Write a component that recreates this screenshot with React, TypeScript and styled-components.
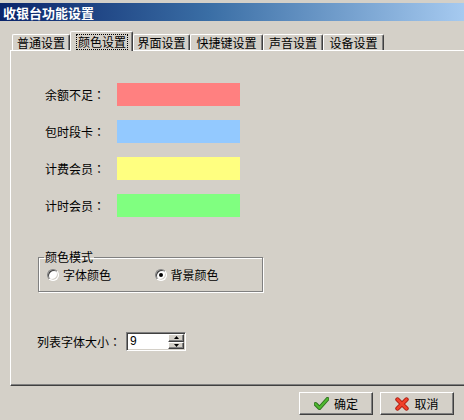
import { Fragment } from 'react';
import styled, { createGlobalStyle } from 'styled-components';

const GlobalStyle = createGlobalStyle`
  body {
    margin: 0;
    font-family: "Noto Sans CJK SC", "Liberation Sans", sans-serif;
    font-size: 12px;
    color: #000;
  }
`;

const Window = styled.div`
  width: 464px;
  height: 420px;
  box-sizing: border-box;
  padding-top: 3px;
  background: #d4d0c8;
  overflow: hidden;
  display: flex;
  flex-direction: column;
`;

const TitleBar = styled.div`
  height: 18px;
  flex: none;
  display: flex;
  align-items: center;
  padding-left: 3px;
  background: linear-gradient(to right, #0a246a, #3a6ea5 45%, #a6caf0);
  color: #fff;
  font-size: 13px;
  font-weight: bold;
  line-height: 1;
`;

const TabStrip = styled.div`
  flex: none;
  height: 19px;
  margin-top: 10px;
  padding-left: 12px;
  display: flex;
  align-items: flex-end;
`;

const Tab = styled.div<{ $active?: boolean; $width: number }>`
  position: relative;
  z-index: ${(p) => (p.$active ? 1 : 0)};
  box-sizing: border-box;
  width: ${(p) => p.$width}px;
  height: ${(p) => (p.$active ? 20 : 16)}px;
  margin-bottom: ${(p) => (p.$active ? -1 : 0)}px;
  padding-left: ${(p) => (p.$active ? 1 : 0)}px;
  background: #d4d0c8;
  border-top: 1px solid #fff;
  border-left: 1px solid #fff;
  border-right: 1px solid #404040;
  border-radius: 2px 2px 0 0;
  box-shadow: inset -1px 0 #808080;
  display: flex;
  align-items: center;
  justify-content: center;
  line-height: 14px;
`;

const FocusText = styled.span<{ $focus?: boolean }>`
  padding: 0 1px;
  border: 1px dotted ${(p) => (p.$focus ? '#000' : 'transparent')};
`;

const Panel = styled.div`
  flex: none;
  box-sizing: border-box;
  width: 480px;
  height: 336px;
  margin-left: 10px;
  padding: 32px 0 0 27px;
  border-top: 1px solid #fff;
  border-left: 1px solid #fff;
  border-bottom: 1px solid #404040;
  box-shadow: inset 0 -1px #808080;
  display: flex;
  flex-direction: column;
  align-items: flex-start;
`;

const ColorList = styled.div`
  margin-left: 7px;
  display: grid;
  grid-template-columns: 72px 123px;
  grid-auto-rows: 23px;
  row-gap: 14px;
  align-items: center;
`;

// traditional-chinese font centres the full-width colon, as in the reference
const Colon = styled.span`
  font-family: "Noto Sans CJK TC", sans-serif;
`;

const Swatch = styled.div<{ $color: string }>`
  height: 23px;
  background: ${(p) => p.$color};
`;

const GroupBox = styled.fieldset`
  box-sizing: border-box;
  width: 225px;
  margin: 33px 0 0;
  padding: 4px 0 9px 5px;
  border: 1px solid #808080;
  box-shadow: 1px 1px 0 #fff, inset 1px 1px 0 #fff;
  min-width: 0;
`;

const Legend = styled.legend`
  padding: 0 1px;
  line-height: 14px;
`;

const RadioRow = styled.div`
  display: flex;
  margin-left: 3px;
`;

const RadioOption = styled.label`
  width: 108px;
  display: flex;
  align-items: center;
  gap: 4px;
  line-height: 14px;
`;

const RadioCircle = styled.span<{ $checked?: boolean }>`
  box-sizing: border-box;
  width: 12px;
  height: 12px;
  border-radius: 50%;
  border: 1px solid;
  border-color: #808080 #fff #fff #808080;
  box-shadow: inset 1px 1px 0 #404040, inset -1px -1px 0 #d4d0c8;
  background: #fff;
  display: flex;
  align-items: center;
  justify-content: center;

  &::after {
    content: '';
    width: 4px;
    height: 4px;
    border-radius: 50%;
    background: ${(p) => (p.$checked ? '#000' : 'transparent')};
  }
`;

const FontSizeRow = styled.div`
  margin: 40px 0 0 -1px;
  display: flex;
  align-items: center;
  gap: 5px;
`;

const SpinBox = styled.div`
  box-sizing: border-box;
  width: 60px;
  height: 19px;
  border: 1px solid;
  border-color: #808080 #fff #fff #808080;
  box-shadow: inset 1px 1px 0 #404040, inset -1px -1px 0 #d4d0c8;
  background: #fff;
  padding: 1px;
  display: flex;
`;

const SpinValue = styled.div`
  flex: 1;
  padding-left: 2px;
  line-height: 15px;
  font-family: "Liberation Sans", sans-serif;
`;

const SpinButtons = styled.div`
  width: 16px;
  display: flex;
  flex-direction: column;
`;

const SpinButton = styled.div`
  flex: 1;
  box-sizing: border-box;
  background: #d4d0c8;
  border: 1px solid;
  border-color: #fff #404040 #404040 #fff;
  box-shadow: inset -1px -1px 0 #808080;
  display: flex;
  align-items: center;
  justify-content: center;
`;

const Footer = styled.div`
  flex: 1;
  display: flex;
  justify-content: flex-end;
  align-items: flex-start;
  gap: 7px;
  padding: 6px 10px 0 0;
`;

const Button = styled.button`
  box-sizing: border-box;
  width: 74px;
  height: 23px;
  padding: 0;
  font: inherit;
  color: #000;
  background: #d4d0c8;
  border: 1px solid;
  border-color: #fff #404040 #404040 #fff;
  box-shadow: inset -1px -1px 0 #808080;
  display: flex;
  align-items: center;
  justify-content: center;
  gap: 5px;
  line-height: 14px;
`;

const tabs = [
  { name: '普通设置', width: 58 },
  { name: '颜色设置', width: 63, active: true },
  { name: '界面设置', width: 57 },
  { name: '快捷键设置', width: 73 },
  { name: '声音设置', width: 60 },
  { name: '设备设置', width: 61 },
];

const colors = [
  { label: '余额不足', color: '#ff8080' },
  { label: '包时段卡', color: '#93c9ff' },
  { label: '计费会员', color: '#ffff80' },
  { label: '计时会员', color: '#80ff80' },
];

const Arrow = ({ up }: { up?: boolean }) => (
  <svg width="5" height="3" viewBox="0 0 5 3">
    <path d={up ? 'M2.5 0 L5 3 L0 3 Z' : 'M0 0 L5 0 L2.5 3 Z'} fill="#000" />
  </svg>
);

const CheckIcon = () => (
  <svg width="15" height="13" viewBox="0 0 15 13">
    <path d="M1.5 7 L5.5 11 L13.5 2" fill="none" stroke="#2d6e1e" strokeWidth="4" strokeLinecap="round" strokeLinejoin="round" />
    <path d="M1.5 7 L5.5 11 L13.5 2" fill="none" stroke="#4fb830" strokeWidth="2.2" strokeLinecap="round" strokeLinejoin="round" />
  </svg>
);

const CrossIcon = () => (
  <svg width="14" height="14" viewBox="0 0 14 14">
    <path d="M2.5 2.5 L11.5 11.5 M11.5 2.5 L2.5 11.5" stroke="#a8180c" strokeWidth="4.4" strokeLinecap="round" />
    <path d="M2.5 2.5 L11.5 11.5 M11.5 2.5 L2.5 11.5" stroke="#f0402a" strokeWidth="2.6" strokeLinecap="round" />
  </svg>
);

const App = () => (
  <>
    <GlobalStyle />
    <Window>
      <TitleBar>收银台功能设置</TitleBar>
      <TabStrip>
        {tabs.map((t) => (
          <Tab key={t.name} $active={t.active} $width={t.width}>
            <FocusText $focus={t.active}>{t.name}</FocusText>
          </Tab>
        ))}
      </TabStrip>
      <Panel>
        <ColorList>
          {colors.map((c) => (
            <Fragment key={c.label}>
              <span>
                {c.label}
                <Colon>：</Colon>
              </span>
              <Swatch $color={c.color} />
            </Fragment>
          ))}
        </ColorList>
        <GroupBox>
          <Legend>颜色模式</Legend>
          <RadioRow>
            <RadioOption>
              <RadioCircle />
              字体颜色
            </RadioOption>
            <RadioOption>
              <RadioCircle $checked />
              背景颜色
            </RadioOption>
          </RadioRow>
        </GroupBox>
        <FontSizeRow>
          <span>
            列表字体大小<Colon>：</Colon>
          </span>
          <SpinBox>
            <SpinValue>9</SpinValue>
            <SpinButtons>
              <SpinButton>
                <Arrow up />
              </SpinButton>
              <SpinButton>
                <Arrow />
              </SpinButton>
            </SpinButtons>
          </SpinBox>
        </FontSizeRow>
      </Panel>
      <Footer>
        <Button>
          <CheckIcon />
          确定
        </Button>
        <Button>
          <CrossIcon />
          取消
        </Button>
      </Footer>
    </Window>
  </>
);

export default App;
